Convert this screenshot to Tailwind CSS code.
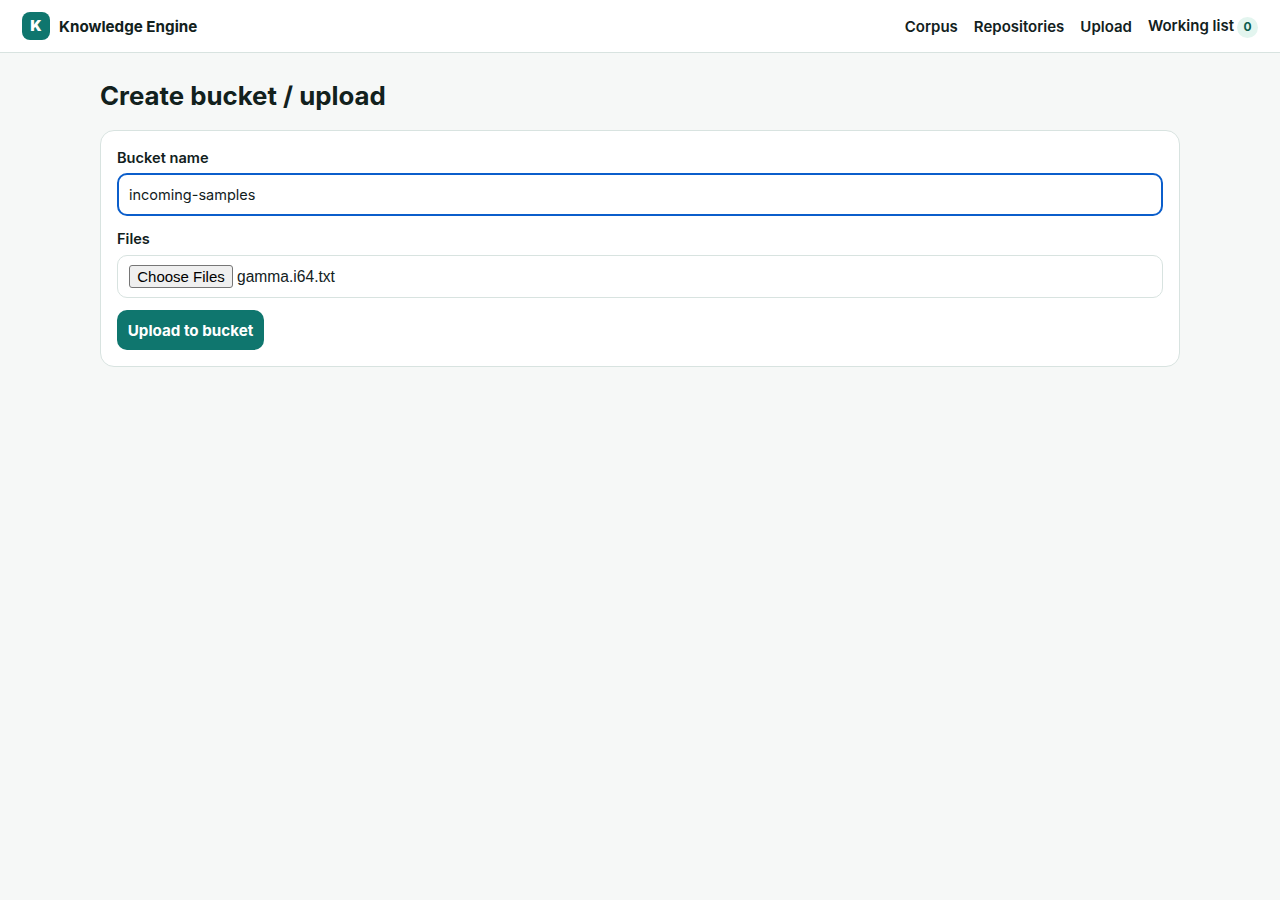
<!DOCTYPE html>
<html lang="en">
  <head>
    <meta charset="UTF-8" />
    <meta name="viewport" content="width=device-width, initial-scale=1.0" />
    <title>Knowledge Engine</title>
    <script src="https://cdn.jsdelivr.net/npm/@tailwindcss/browser@4"></script>
  </head>
  <body class="bg-[#f6f8f7] min-h-screen font-['Inter',sans-serif] text-[#12211d]">
    <!-- Top bar -->
    <header class="h-[53px] bg-white border-b border-[#d8e3e0] pl-[22px] pr-[22px] flex items-center justify-between">
      <a class="flex items-center gap-[9px]">
        <span class="w-[28px] h-[28px] pt-[1px] rounded-lg bg-[#0f766e] text-white flex items-center justify-center text-[15px] font-black">K</span>
        <span class="text-[15.2px] font-bold pt-[2px]">Knowledge Engine</span>
      </a>
      <nav class="flex items-center gap-4 text-[15px] font-semibold">
        <a class="pt-[2px]">Corpus</a>
        <a class="pt-[2px]">Repositories</a>
        <a class="pt-[2px]">Upload</a>
        <a class="flex items-center gap-[3px]">
          <span>Working list</span>
          <span class="w-[21px] h-[21px] mt-[2px] rounded-full bg-[#e3f5ef] text-[#0b5f4f] text-xs font-bold flex items-center justify-center">0</span>
        </a>
      </nav>
    </header>

    <main class="w-[1080px] mx-auto">
      <h1 class="text-[25.8px] leading-[34px] font-bold mt-[26px] mb-[17px]">Create bucket / upload</h1>

      <!-- Upload form -->
      <form class="bg-white border border-[#d8e3e0] rounded-[14px] p-4 flex flex-col">
        <label class="text-[14.6px] font-semibold leading-[17px] mb-[6px] mt-[3px]">Bucket name</label>
        <input
          class="h-[43px] px-[10px] border-2 border-[#0b5ecb] rounded-[10px] text-[14.5px] outline-none bg-white"
          value="incoming-samples"
        />
        <label class="text-[14.6px] font-semibold leading-[17px] mt-[15px] mb-[7px]">Files</label>
        <div class="h-[43px] px-[11px] border border-[#d8e3e0] rounded-[10px] flex items-center gap-[4px]">
          <button type="button" class="h-[23px] w-[104px] bg-[#efefef] border border-[#767676] rounded-[3px] text-[15px] font-['Liberation_Sans',sans-serif] text-black">Choose Files</button>
          <span class="font-['Liberation_Sans',sans-serif] text-[15.6px]">gamma.i64.txt</span>
        </div>
        <button type="button" class="mt-3 h-[40px] w-[147px] pt-[2px] bg-[#0f766e] text-white rounded-[10px] text-[15.2px] font-bold">Upload to bucket</button>
      </form>
    </main>
  </body>
</html>
